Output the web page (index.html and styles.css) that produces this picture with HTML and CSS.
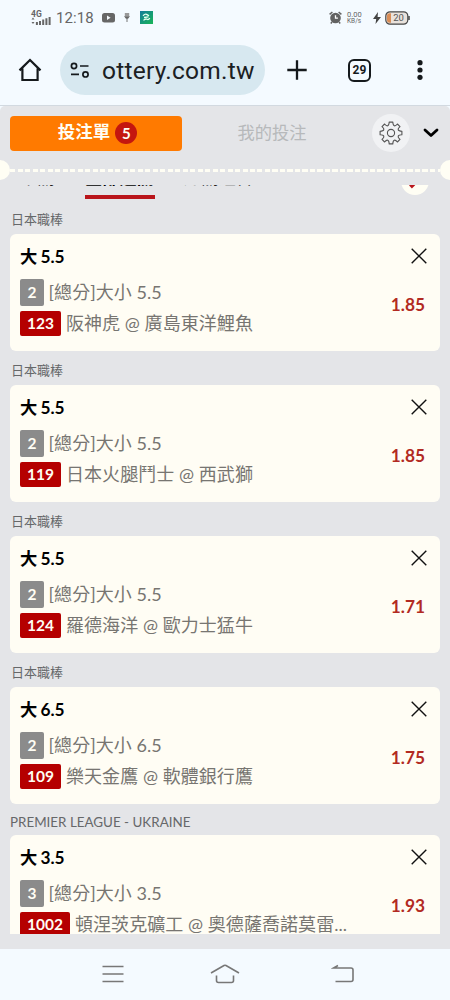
FILE: index.html
```html
<!DOCTYPE html>
<html lang="zh-Hant">
<head>
<meta charset="utf-8">
<title>投注單</title>
<link rel="stylesheet" href="styles.css">
</head>
<body>
<div class="status">
  <div class="net"><span class="net-type">4G</span><svg width="20" height="8" viewBox="0 0 20 8"><path d="M0.5 2.5L2 .5l1.500 2zM.5 5L2 7l1.500-2z" fill="#666"/><path d="M5.900 5v3M9 4v4M12.200 2.500v5.500M15.400 1.200v6.800M18.600 0v8" stroke="#666" stroke-width="2"/></svg></div>
  <span class="clock">12:18</span>
  <svg class="yt" width="13" height="10" viewBox="0 0 13 10"><rect width="13" height="9.500" rx="2.500" fill="#666"/><path d="M5 2.600v4.300l3.600-2.150z" fill="#f3f8fc"/></svg>
  <svg class="usb" width="6" height="9" viewBox="0 0 6 9"><path d="M.8 0h4.400v3.200H.8z" fill="#999"/><path d="M0 3.200h6L4 5.700H2z" fill="#666"/><path d="M3 5v4" stroke="#777"/></svg>
  <svg class="app" width="13" height="13" viewBox="0 0 13 13"><defs><linearGradient id="ag" x2="1" y2="1"><stop offset="0" stop-color="#117b9b"/><stop offset="1" stop-color="#19b657"/></linearGradient></defs><rect width="13" height="13" fill="url(#ag)"/><path d="M3 4.800Q5 2.600 6.500 3.300T9 4.800M4 6.500l4.500-.6M3.500 9.400q2-2 3.500-1.100t2.800-1.200" fill="none" stroke="#e5fff0" stroke-width="1.300"/></svg>
  <span class="spacer"></span>
  <svg class="alarm" width="13" height="13" viewBox="0 0 13 13"><circle cx="6.500" cy="7" r="5.300" fill="#626262"/><path d="M.6 3.300L3.400 1M12.400 3.300L9.600 1M3 11l-1.200 1.500M10 11l1.200 1.500" stroke="#626262" stroke-width="1.500"/><path d="M6.500 4.200v3h2.400" fill="none" stroke="#fff" stroke-width="1.300"/></svg>
  <div class="rate"><span>0.00</span><span class="unit">KB/s</span></div>
  <svg class="bolt" width="8" height="12" viewBox="0 0 8 12"><path d="M5 0L0 7h3.200L2.500 12 8 5H4.600z" fill="#444"/></svg>
  <svg class="battery" width="25" height="14" viewBox="0 0 25 14"><rect x=".8" y=".8" width="22" height="12.400" rx="4.200" fill="#e9e2dc" stroke="#474747" stroke-width="1.200"/><path d="M6 2.200v9.600H4.800a2.800 2.800 0 0 1-2.800-2.800V5a2.800 2.800 0 0 1 2.800-2.800z" fill="#d98d57"/><path d="M24 5v4" stroke="#474747" stroke-width="1.500"/><text x="13.600" y="10" class="bat-text">20</text></svg>
</div>
<div class="browser">
  <svg class="home" width="24" height="24" viewBox="0 0 24 24"><path d="M1.500 12.400L12 2l10.500 10.400M4.400 10.500v11.500h15.200V10.500" fill="none" stroke="#15191c" stroke-width="2.200"/></svg>
  <div class="url">
    <svg width="20" height="18" viewBox="0 0 20 18"><g fill="none" stroke="#15191c" stroke-width="1.700"><circle cx="4" cy="5" r="2.600"/><path d="M10 5h8.500M1 13.400h8"/><circle cx="15.500" cy="13.400" r="2.600"/></g></svg>
    <span>ottery.com.tw</span>
  </div>
  <svg class="plus" width="20" height="20" viewBox="0 0 20 20"><path d="M10 .3v19.400M.3 10h19.400" stroke="#15191c" stroke-width="2.300"/></svg>
  <div class="count">29</div>
  <svg class="dots" width="6" height="20" viewBox="0 0 6 20"><g fill="#15191c"><circle cx="3" cy="2.700" r="2.600"/><circle cx="3" cy="10" r="2.600"/><circle cx="3" cy="17.300" r="2.600"/></g></svg>
</div>
<main class="sheet">
  <div class="head">
    <div class="slip"><span>投注單</span><span class="badge">5</span></div>
    <div class="mine">我的投注</div>
    <div class="gear"><svg width="24" height="24" viewBox="0 0 24 24"><g fill="none" stroke="#555" stroke-width="1.100" stroke-linejoin="round"><circle cx="12" cy="12" r="3.600"/><path d="M10.200 1.100H13.800C14 5.500 16 6 18.400 3L21 5.600C18 8 18.500 10 22.900 10.200V13.800C18.500 14 18 16 21 18.400L18.400 21C16 18 14 18.500 13.800 22.900H10.200C10 18.500 8 18 5.600 21L3 18.400C6 16 5.500 14 1.100 13.800V10.200C5.500 10 6 8 3 5.600L5.600 3C8 6 10 5.500 10.200 1.100z"/></g></svg></div>
    <svg class="chev" width="16" height="10" viewBox="0 0 16 10"><path d="M2 2l6 5.500L14 2" fill="none" stroke="#000" stroke-width="2.800" stroke-linecap="round" stroke-linejoin="round"/></svg>
  </div>
  <div class="tear"><i class="notch"></i><i class="dash"></i><i class="notch right"></i></div>
  <div class="list">
    <div class="tabs"><span class="tab one">單關</span><span class="tab active">全部過關</span><span class="tab">過關組合</span><span class="trash"><svg width="12" height="12" viewBox="0 0 12 12"><path d="M2.500 10L10 2.500" stroke="#b9151b" stroke-width="4"/></svg></span></div>

    <div class="league">日本職棒</div>
    <section class="card"><div class="pick">大 5.5</div><svg class="x" width="16" height="16" viewBox="0 0 16 16"><path d="M.7.700l14.600 14.600M15.300.700L.7 15.300"/></svg><div class="row"><b class="num">2</b>[總分]大小 5.5</div><div class="row match"><b class="code">123</b>阪神虎 @ 廣島東洋鯉魚</div><div class="odds">1.85</div></section>
    <div class="league">日本職棒</div>
    <section class="card"><div class="pick">大 5.5</div><svg class="x" width="16" height="16" viewBox="0 0 16 16"><path d="M.7.700l14.600 14.600M15.300.700L.7 15.300"/></svg><div class="row"><b class="num">2</b>[總分]大小 5.5</div><div class="row match"><b class="code">119</b>日本火腿鬥士 @ 西武獅</div><div class="odds">1.85</div></section>
    <div class="league">日本職棒</div>
    <section class="card"><div class="pick">大 5.5</div><svg class="x" width="16" height="16" viewBox="0 0 16 16"><path d="M.7.700l14.600 14.600M15.300.700L.7 15.300"/></svg><div class="row"><b class="num">2</b>[總分]大小 5.5</div><div class="row match"><b class="code">124</b>羅德海洋 @ 歐力士猛牛</div><div class="odds">1.71</div></section>
    <div class="league">日本職棒</div>
    <section class="card"><div class="pick">大 6.5</div><svg class="x" width="16" height="16" viewBox="0 0 16 16"><path d="M.7.700l14.600 14.600M15.300.700L.7 15.300"/></svg><div class="row"><b class="num">2</b>[總分]大小 6.5</div><div class="row match"><b class="code">109</b>樂天金鷹 @ 軟體銀行鷹</div><div class="odds">1.75</div></section>
    <div class="league latin">PREMIER LEAGUE - UKRAINE</div>
    <section class="card"><div class="pick">大 3.5</div><svg class="x" width="16" height="16" viewBox="0 0 16 16"><path d="M.7.700l14.600 14.600M15.300.700L.7 15.300"/></svg><div class="row"><b class="num">3</b>[總分]大小 3.5</div><div class="row match"><b class="code">1002</b>頓涅茨克礦工 @ 奧德薩喬諾莫雷...</div><div class="odds">1.93</div></section>
  </div>
</main>
<nav class="nav">
  <svg width="22" height="18" viewBox="0 0 22 18"><path d="M.5 1.500h21M.5 9h21M.5 16.500h21"/></svg>
  <svg width="30" height="20" viewBox="0 0 30 20"><path d="M1 9L14 1.500q1-.5 2 0L29 9M6.500 11.500v5q0 2 2 2h13q2 0 2-2v-5"/></svg>
  <svg width="24" height="20" viewBox="0 0 24 20"><path d="M7 1.500L2.500 4H20q2 0 2 2v9.500q0 2-2 2H4.500"/></svg>
</nav>
</body>
</html>
```
FILE: styles.css
```css
* { box-sizing: border-box; }
body {
  margin: 0;
  width: 450px;
  height: 1000px;
  overflow: hidden;
  display: flex;
  flex-direction: column;
  background: #f4faff;
  font-family: Lato, "Noto Sans CJK TC", sans-serif;
}
svg { display: block; flex: none; }
.status {
  height: 35px;
  flex: none;
  display: flex;
  align-items: center;
  padding: 0 40px 0 31px;
  font-family: Roboto, sans-serif;
  color: #666;
}
.net { display: flex; flex-direction: column; width: 20px; }
.net-type { font-size: 8.500px; line-height: 6px; font-weight: 700; }
.clock { font-size: 15px; letter-spacing: .1px; margin-left: 5px; width: 38px; }
.yt { margin-left: 8px; }
.usb { margin-left: 9px; }
.app { margin-left: 10px; }
.spacer { flex: 1; }
.rate { display: flex; flex-direction: column; width: 15px; margin-left: 5px; font-size: 7.500px; line-height: 7px; }
.unit { font-size: 6.500px; line-height: 6px; }
.bolt { margin-left: 11px; }
.battery { margin-left: 4px; }
.bat-text { font: 9.500px Roboto, sans-serif; fill: #555; text-anchor: middle; }

.browser {
  height: 71px;
  flex: none;
  display: flex;
  align-items: center;
  padding: 0 27px 0 18px;
  border-bottom: 1px solid #d2d9e0;
}
.url {
  width: 205px;
  height: 50px;
  margin-left: 18px;
  border-radius: 25px;
  background: #d7e8f0;
  display: flex;
  align-items: center;
  padding-left: 10px;
  gap: 12px;
  font: 24.500px/52px Roboto, sans-serif;
  letter-spacing: .25px;
  white-space: nowrap;
  color: #1b2023;
}
.url span { padding-top: 2px; }
.plus { margin-left: 22px; }
.count {
  width: 23px;
  height: 23px;
  margin-left: 41px;
  border: 2.500px solid #15191c;
  border-radius: 6px;
  font: 700 12px/19px Roboto, sans-serif;
  text-align: center;
  color: #15191c;
}
.dots { margin-left: auto; }

.sheet {
  height: 843px;
  flex: none;
  display: flex;
  flex-direction: column;
  background: #e4e5e8;
  border-radius: 5px 5px 0 0;
}
.head { height: 54px; flex: none; display: flex; align-items: center; padding: 0 11px 0 10px; }
.slip {
  width: 172px;
  height: 35px;
  display: flex;
  align-items: center;
  justify-content: center;
  gap: 5px;
  padding-left: 3px;
  border-radius: 4px;
  background: #ff7a00;
  color: #fffef4;
  font-weight: 700;
  font-size: 17.500px;
  line-height: 26px;
}
.slip span:first-child { padding-bottom: 2px; }
.badge {
  width: 22px;
  height: 22px;
  border-radius: 50%;
  background: #c4160f;
  font-size: 15px;
  line-height: 22px;
  text-align: center;
}
.mine { width: 180px; padding-bottom: 3px; text-align: center; font-size: 17.300px; color: #b7b9bb; }
.gear {
  width: 38px;
  height: 38px;
  margin-left: 10px;
  border-radius: 50%;
  background: #f1f2f4;
  display: flex;
  align-items: center;
  justify-content: center;
}
.chev { margin-left: auto; }
.tear { height: 25px; flex: none; display: flex; align-items: flex-start; overflow: hidden; }
.notch { width: 10px; height: 20px; border-radius: 0 10px 10px 0; background: #fffef4; }
.notch.right { border-radius: 10px 0 0 10px; }
.dash {
  flex: 1;
  height: 3px;
  margin-top: 9px;
  background: repeating-linear-gradient(90deg, #fffef4 0 5px, transparent 5px 7.500px);
}
.list { height: 749px; flex: none; overflow: hidden; padding: 0 10px; }
.tabs { height: 24px; display: flex; align-items: flex-start; }
.tab {
  width: 70px;
  height: 36px;
  margin-top: -22px;
  margin-left: 29px;
  font-size: 17.300px;
  line-height: 29px;
  color: #222;
}
.tab.one { width: 35px; margin-left: 10px; }
.tab.active { margin-left: 30px; border-bottom: 4px solid #b9151b; font-weight: 700; color: #000; }
.trash {
  width: 28px;
  height: 28px;
  margin: -18px 11px 0 auto;
  border-radius: 50%;
  background: #fffef4;
  display: flex;
  padding: 10px 0 0 7px;
}
.league { height: 34px; padding: 10px 0 0 1px; font-size: 13px; line-height: 19px; color: #66686a; }
.tabs + .league { height: 25px; padding-top: 1px; }
.league.latin { height: 31px; padding: 0; font-size: 13.400px; line-height: 36px; }
.card {
  height: 117px;
  display: grid;
  grid-template-columns: 1fr auto;
  grid-template-rows: 43px 31px 43px;
  padding: 0 13px 0 10px;
  border-radius: 6px;
  background: #fffdf4;
}
.pick { font-weight: 700; font-size: 17.300px; line-height: 46px; word-spacing: -1px; color: #000; }
.x { grid-column: 2; margin-top: 14px; justify-self: end; fill: none; stroke: #111; stroke-width: 1.400; }
.row {
  grid-column: 1;
  display: flex;
  align-items: center;
  gap: 4.500px;
  font-size: 18px;
  line-height: 27px;
  letter-spacing: .06px;
  color: #777571;
  white-space: pre;
}
.match { align-items: flex-start; gap: 5px; line-height: 31px; }
.num, .code { color: #fffdf4; border-radius: 2px; text-align: center; font-size: 15.500px; }
.num { width: 24px; height: 27px; background: #8b8b8b; }
.code { height: 25px; line-height: 25px; padding: 0 7px; margin-top: 3px; background: #b50000; letter-spacing: 0; }
.odds { grid-column: 2; grid-row: 2 / 4; width: 52px; padding-top: 17px; padding-right: 2px; font-weight: 700; font-size: 17.300px; line-height: 22px; text-align: right; color: #b22a22; }
.nav {
  flex: 1;
  display: flex;
  justify-content: space-between;
  align-items: center;
  padding: 0 95px 2px 102px;
}
.nav svg { fill: none; stroke: #777; stroke-width: 1.600; }
.nav svg:nth-child(2) { margin-right: 5px; }
```
